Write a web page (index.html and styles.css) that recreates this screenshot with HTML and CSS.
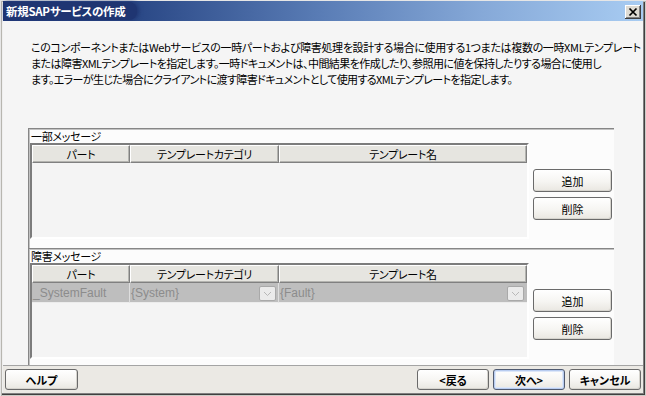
FILE: index.html
```html
<!DOCTYPE html>
<html lang="ja">
<head>
<meta charset="utf-8">
<title>新規SAPサービスの作成</title>
<link rel="stylesheet" href="styles.css">
</head>
<body>
<div class="window">
  <div class="titlebar">
    <span class="title">新規SAPサービスの作成</span>
    <span class="close" aria-label="閉じる">
      <svg width="16" height="14" viewBox="0 0 16 14"><path d="M4.5 3.5 L11.5 10.5 M11.5 3.5 L4.5 10.5" stroke="#000" stroke-width="1.7" fill="none"/></svg>
    </span>
  </div>
  <div class="body">
    <p class="desc"><span class="l1">このコンポーネントまたはWebサービスの一時パートおよび障害処理を設計する場合に使用する1つまたは複数の一時XMLテンプレート</span><br><span class="l2">または障害XMLテンプレートを指定します。一時ドキュメントは、中間結果を作成したり、参照用に値を保持したりする場合に使用し</span><br><span class="l3">ます。エラーが生じた場合にクライアントに渡す障害ドキュメントとして使用するXMLテンプレートを指定します。</span></p>

    <section class="group g1">
      <div class="group-label">一部メッセージ</div>
      <div class="group-main">
        <div class="table">
          <div class="thead">
            <div class="th c1">パート</div>
            <div class="th c2">テンプレートカテゴリ</div>
            <div class="th c3">テンプレート名</div>
          </div>
        </div>
        <div class="side">
          <button class="btn">追加</button>
          <button class="btn">削除</button>
        </div>
      </div>
    </section>

    <section class="group g2">
      <div class="group-label">障害メッセージ</div>
      <div class="group-main">
        <div class="table">
          <div class="thead">
            <div class="th c1">パート</div>
            <div class="th c2">テンプレートカテゴリ</div>
            <div class="th c3">テンプレート名</div>
          </div>
          <div class="row">
            <div class="td c1">_SystemFault</div>
            <div class="td c2"><span>{System}</span><span class="dd"><svg width="9" height="6" viewBox="0 0 9 6"><path d="M1 1 L4.5 4.5 L8 1" stroke="#b8b8b8" stroke-width="1" fill="none"/></svg></span></div>
            <div class="td c3"><span>{Fault}</span><span class="dd"><svg width="9" height="6" viewBox="0 0 9 6"><path d="M1 1 L4.5 4.5 L8 1" stroke="#b8b8b8" stroke-width="1" fill="none"/></svg></span></div>
          </div>
        </div>
        <div class="side">
          <button class="btn">追加</button>
          <button class="btn">削除</button>
        </div>
      </div>
    </section>
  </div>
  <div class="footer">
    <button class="btn fbtn help">ヘルプ</button>
    <div class="spacer"></div>
    <button class="btn fbtn">&lt;戻る</button>
    <button class="btn fbtn default">次へ&gt;</button>
    <button class="btn fbtn">キャンセル</button>
  </div>
</div>
</body>
</html>
```
FILE: styles.css
```css
html, body {
  margin: 0;
  padding: 0;
  background: #d4d0c8;
}

body {
  font-family: "Noto Sans CJK JP", "Liberation Sans", sans-serif;
  font-size: 11px;
  color: #000;
}

.window {
  box-sizing: border-box;
  width: 646px;
  height: 396px;
  padding: 1px 3px 3px 3px;
  display: flex;
  flex-direction: column;
  background: #efefef;
  box-shadow:
    inset 1px 1px 0 #e6e6e6,
    inset 2px 2px 0 #b8b6b0,
    inset -1px -1px 0 #cfcdc8,
    inset -2px -2px 0 #404040,
    inset -3px -3px 0 #808080;
}

.titlebar {
  height: 20px;
  flex: none;
  display: flex;
  align-items: center;
  background: linear-gradient(to right, #213a7a 0%, #2c4a88 22%, #5a7db6 50%, #86a9d8 75%, #a8ccf2 100%);
}

.title {
  display: flex;
  align-items: center;
  height: 18px;
  padding: 0 12px 0 3px;
  color: #fff;
  font-weight: bold;
  font-size: 11.5px;
  letter-spacing: -0.3px;
  font-feature-settings: "palt";
  background: #1f3572;
  border-radius: 0 8px 8px 0;
  box-shadow: 2px 0 4px #1f3572;
}

.close {
  margin-left: auto;
  margin-right: 2px;
  margin-top: 2px;
  width: 16px;
  height: 14px;
  box-sizing: border-box;
  display: flex;
  background: #dedbd3;
  box-shadow: inset -1px -1px 0 #404040, inset 1px 1px 0 #ffffff, inset -2px -2px 0 #808080;
}

.close svg {
  display: block;
}

.body {
  flex: 1;
  display: flex;
  flex-direction: column;
  background: #f5f5f5;
  padding: 18px 0 0 28px;
  min-height: 0;
}

.desc {
  margin: 0 0 41px 0;
  height: 48px;
  line-height: 16px;
  font-size: 11px;
  white-space: nowrap;
  letter-spacing: -0.35px;
  font-feature-settings: "palt";
}

.desc .l2 {
  letter-spacing: -0.55px;
}

.desc .l3 {
  letter-spacing: -0.6px;
}

.group {
  box-sizing: border-box;
  margin-left: -3px;
  width: 586px;
  background: #fcfcfc;
  border-top: 1px solid #868686;
  border-left: 1px solid #868686;
  box-shadow: inset 1px 1px 0 #c2c2c2;
  display: flex;
  flex-direction: column;
}

.g1 {
  height: 120px;
  flex: none;
}

.g2 {
  flex: 1;
}

.group-label {
  height: 14px;
  line-height: 14px;
  padding-left: 2px;
  font-feature-settings: "palt";
  letter-spacing: -0.3px;
}

.group-main {
  display: flex;
  padding-left: 1px;
}

.table {
  box-sizing: border-box;
  width: 499px;
  height: 96px;
  border: 2px solid;
  border-color: #7c7c7c #ffffff #ffffff #7c7c7c;
  background: #f4f4f4;
}

.thead, .row {
  display: flex;
}

.c1 { width: 98px; }
.c2 { width: 149px; }
.c3 { width: 248px; }

.th {
  box-sizing: border-box;
  height: 18px;
  line-height: 16px;
  text-align: center;
  background: #e6e5e0;
  border: 1px solid;
  border-color: #ffffff #808080 #808080 #ffffff;
  box-shadow: inset -1px -1px 0 #b4b4b0;
  font-feature-settings: "palt";
  letter-spacing: -0.3px;
}

.row {
  height: 20px;
  background: #bebebe;
}

.td {
  box-sizing: border-box;
  height: 20px;
  display: flex;
  align-items: center;
  justify-content: space-between;
  padding: 1px 2px 0 1px;
  border-right: 1px solid #dedede;
  border-bottom: 1px solid #ececec;
  font-family: "Liberation Sans", "DejaVu Sans", sans-serif;
  font-size: 12px;
  color: #8c8c8c;
}

.c3.td {
  border-right: none;
  padding-right: 3px;
}

.dd {
  box-sizing: border-box;
  width: 17px;
  height: 15px;
  display: flex;
  align-items: center;
  justify-content: center;
  background: #ebebeb;
  border: 1px solid #a9a9a9;
  border-radius: 2px;
  margin-top: 1px;
}

.side {
  display: flex;
  flex-direction: column;
  gap: 5px;
  padding-top: 26px;
  margin-left: 4px;
}

.btn {
  box-sizing: border-box;
  width: 79px;
  height: 23px;
  padding: 0;
  margin: 0;
  font-family: "Noto Sans CJK JP", "Liberation Sans", sans-serif;
  font-size: 11px;
  color: #000;
  border: 1px solid #6a6a6a;
  border-radius: 3px;
  background: linear-gradient(#ffffff, #f6f5f2 55%, #e9e7e1);
  box-shadow: inset -1px -1px 0 #d6d4ce;
}

.footer {
  flex: none;
  box-sizing: border-box;
  height: 28px;
  border-top: 1px solid #a4a4a4;
  background: #ebe9e4;
  display: flex;
  align-items: flex-start;
  gap: 4px;
  padding: 3px 2px 0 2px;
}

.spacer {
  flex: 1;
}

.fbtn {
  width: 72px;
  height: 21px;
  font-weight: bold;
  font-feature-settings: "palt";
}

.help {
  width: 73px;
}

.default {
  border-color: #505a70;
  box-shadow: inset 0 0 0 1px #b8ccf0, inset 0 0 0 2px #dde7f8;
}
```
